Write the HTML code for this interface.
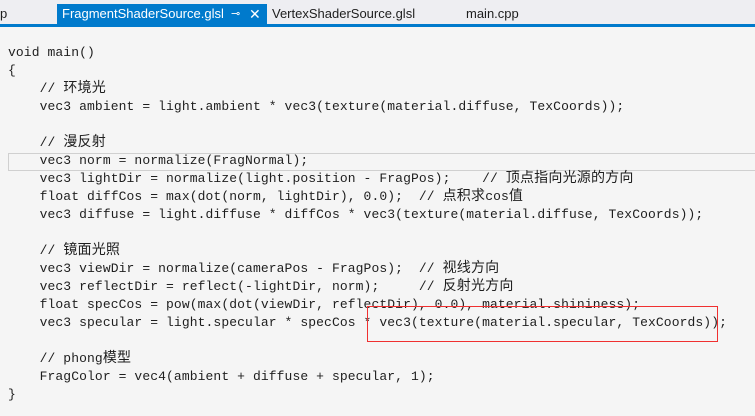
<!DOCTYPE html>
<html><head><meta charset="utf-8"><style>
html,body{margin:0;padding:0;width:755px;height:416px;overflow:hidden;background:#f5f5f5;}
.tabs{position:absolute;left:0;top:0;width:755px;height:24px;background:#eeeef2;font-family:"Liberation Sans","Noto Sans CJK SC",sans-serif;font-size:13px;color:#1e1e1e;}
.line{position:absolute;left:0;top:24px;width:755px;height:3px;background:#007acc;}
.tab{position:absolute;top:4px;height:20px;line-height:20px;}
.act{left:57px;width:210px;background:#007acc;color:#fff;}
pre{position:absolute;left:8px;top:44px;margin:0;font-family:"Liberation Mono","Noto Sans CJK SC",monospace;font-size:13px;letter-spacing:0.1px;line-height:18px;color:#1e1e1e;}
pre span{font-size:14px;letter-spacing:0.2px;}
.cur{position:absolute;left:8px;top:153px;width:760px;height:18px;border:1px solid #d0d0d0;box-sizing:border-box;}
.red{position:absolute;left:367px;top:306px;width:351px;height:36px;border:1px solid #f03030;box-sizing:border-box;}
</style></head><body>
<div class="tabs">
<div class="tab" style="left:0">p</div>
<div class="tab act"><span style="padding-left:5px">FragmentShaderSource.glsl</span><span style="position:absolute;left:174px;font-size:11px">⊸</span><span style="position:absolute;left:192px;font-size:14px">✕</span></div>
<div class="tab" style="left:272px">VertexShaderSource.glsl</div>
<div class="tab" style="left:466px">main.cpp</div>
</div>
<div class="line"></div>
<div class="cur"></div>
<pre>void main()
{
    // <span>环境光</span>
    vec3 ambient = light.ambient * vec3(texture(material.diffuse, TexCoords));

    // <span>漫反射</span>
    vec3 norm = normalize(FragNormal);
    vec3 lightDir = normalize(light.position - FragPos);    // <span>顶点指向光源的方向</span>
    float diffCos = max(dot(norm, lightDir), 0.0);  // <span>点积求</span>cos<span>值</span>
    vec3 diffuse = light.diffuse * diffCos * vec3(texture(material.diffuse, TexCoords));

    // <span>镜面光照</span>
    vec3 viewDir = normalize(cameraPos - FragPos);  // <span>视线方向</span>
    vec3 reflectDir = reflect(-lightDir, norm);     // <span>反射光方向</span>
    float specCos = pow(max(dot(viewDir, reflectDir), 0.0), material.shininess);
    vec3 specular = light.specular * specCos * vec3(texture(material.specular, TexCoords));

    // phong<span>模型</span>
    FragColor = vec4(ambient + diffuse + specular, 1);
}</pre>
<div class="red"></div>
</body></html>
